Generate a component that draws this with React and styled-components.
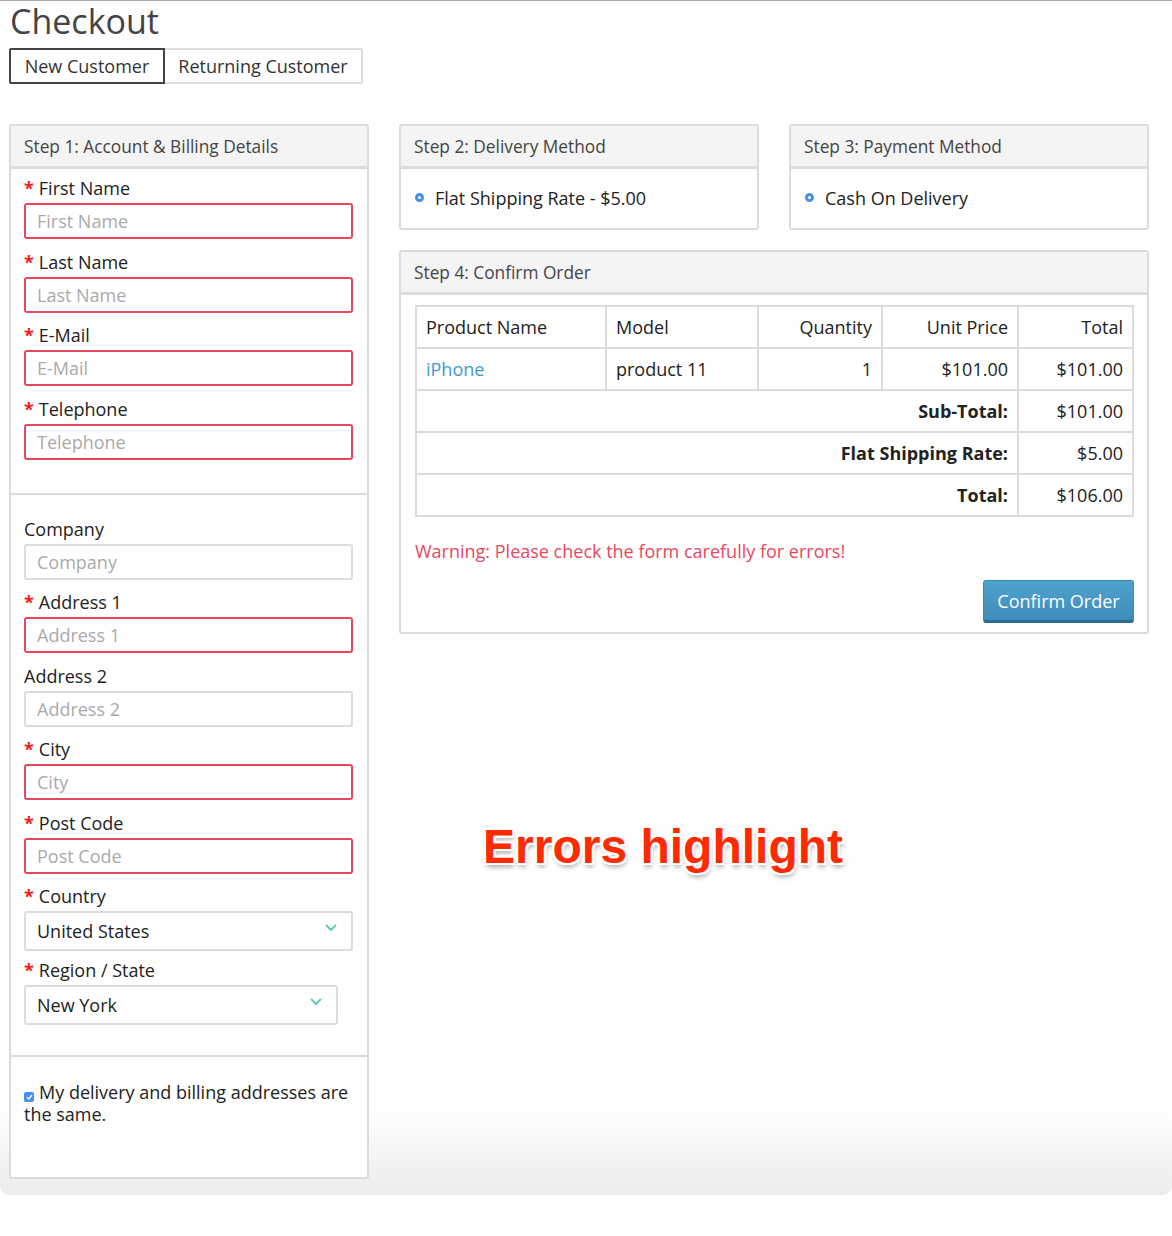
import React from "react";
import styled, { createGlobalStyle } from "styled-components";

const GlobalStyle = createGlobalStyle`
  body {
    margin: 0;
    background: #fff;
    font-family: "Open Sans", "Liberation Sans", sans-serif;
    color: #333;
  }
  * { box-sizing: border-box; }
`;

// styled const
const Page = styled.div`
  width: 1172px;
  min-height: 1194px;
  border-top: 1px solid #a8a8a8;
  border-radius: 0 0 9px 9px;
  background: linear-gradient(to bottom, #fff 0, #fff 1105px, #ececec 100%);
  padding: 0 23px 16px 9px;
`;

const Title = styled.h1`
  margin: 0 0 0 1px;
  font-size: 34px;
  line-height: 40px;
  font-weight: 400;
  color: #444;
`;

const Tabs = styled.div`
  display: flex;
  margin-top: 7px;
`;

const Tab = styled.button`
  height: 36px;
  padding: 0;
  white-space: nowrap;
  text-align: center;
  font-family: inherit;
  font-size: 18px;
  color: #333;
  background: #fff;
  border: 2px solid ${(p) => (p.$active ? "#444" : "#ddd")};
  border-left-width: ${(p) => (p.$active ? "2px" : "0")};
  border-radius: ${(p) => (p.$active ? "2px 0 0 2px" : "0 2px 2px 0")};
  width: ${(p) => p.$w}px;
`;

const Columns = styled.div`
  display: grid;
  grid-template-columns: 360px 750px;
  column-gap: 30px;
  margin-top: 40px;
  align-items: start;
`;

const RightCol = styled.div`
  display: flex;
  flex-direction: column;
  gap: 20px;
`;

const TopRow = styled.div`
  display: grid;
  grid-template-columns: 360px 360px;
  column-gap: 30px;
`;

const Panel = styled.div`
  border: 2px solid #dcdcdc;
  border-radius: 3px;
  background: #fff;
`;

const PanelHead = styled.div`
  height: 43px;
  line-height: 41px;
  padding: 0 13px;
  background: #f4f4f4;
  border-bottom: 3px solid #dcdcdc;
  font-size: 17.3px;
  color: #444;
`;

const Section = styled.div`
  padding: ${(p) => p.$pad};
  border-top: ${(p) => (p.$divided ? "2px solid #dcdcdc" : "none")};
`;

const Group = styled.div`
  margin-bottom: ${(p) => (p.$last ? 0 : p.$tight ? 7 : 10.5)}px;
`;

const Label = styled.div`
  font-size: 18px;
  line-height: 24px;
  color: #222;
  margin-bottom: 3px;
`;

const Star = styled.span`
  color: #f31a1a;
  font-weight: 700;
  margin-right: 5px;
`;

const Input = styled.input`
  display: block;
  width: 329px;
  height: 36px;
  padding: 0 11px;
  font-family: inherit;
  font-size: 18px;
  color: #333;
  border: 2px solid ${(p) => (p.$error ? "#e8475f" : "#dcdcdc")};
  border-radius: 3px;
  outline: none;
  &::placeholder { color: #aaa; }
`;

const SelectBox = styled.div`
  display: flex;
  align-items: center;
  justify-content: space-between;
  width: ${(p) => p.$w}px;
  height: 40px;
  padding: 0 14px 0 11px;
  font-size: 18px;
  color: #222;
  border: 2px solid #dcdcdc;
  border-radius: 3px;
  svg { margin-top: -7px; }
`;

const CheckLine = styled.div`
  font-size: 18px;
  line-height: 22px;
  color: #222;
`;

const CheckBox = styled.span`
  display: inline-flex;
  align-items: center;
  justify-content: center;
  width: 10px;
  height: 10px;
  background: #4a8ff0;
  border-radius: 2px;
  margin-right: 5px;
  vertical-align: -1px;
`;

const Option = styled.div`
  display: flex;
  align-items: center;
  font-size: 18px;
  line-height: 24px;
  color: #222;
  padding: 17px 13px 18px 14px;
`;

const Radio = styled.span`
  width: 9px;
  height: 9px;
  border-radius: 50%;
  border: 3px solid #4a8fe6;
  background: #fff;
  margin-right: 11px;
  margin-top: -1px;
`;

const Body = styled.div`
  padding: 10px 13px 9px 14px;
`;

const Table = styled.table`
  width: 719px;
  border-collapse: collapse;
  font-size: 18px;
  color: #222;
  td {
    border: 2px solid #dcdcdc;
    height: 42px;
    padding: 0 9px;
    line-height: 24px;
  }
`;

const Cell = styled.td`
  text-align: ${(p) => (p.$right ? "right" : "left")};
  font-weight: ${(p) => (p.$bold ? 700 : 400)};
  width: ${(p) => (p.$w ? p.$w + "px" : "auto")};
`;

const Link = styled.a`
  color: #3f9ad0;
  text-decoration: none;
`;

const Warning = styled.div`
  margin-top: 22px;
  font-size: 18px;
  line-height: 24px;
  color: #e9475e;
`;

const Actions = styled.div`
  display: flex;
  justify-content: flex-end;
  margin-top: 17px;
`;

const ConfirmButton = styled.button`
  width: 151px;
  height: 43px;
  font-family: inherit;
  font-size: 18px;
  color: #fff;
  background: linear-gradient(to bottom, #4ea3ce, #3e8cbb);
  border: 1px solid #3a86b4;
  border-bottom: 3px solid #2b6b90;
  border-radius: 3px;
`;

const Annotation = styled.div`
  margin: 165px 0 0 84px;
  font-family: "Liberation Sans", Arial, sans-serif;
  font-weight: 700;
  font-size: 48px;
  line-height: 56px;
  color: #ff2a00;
  text-shadow:
    -2px -2px 0 #fff, 2px -2px 0 #fff, -2px 2px 0 #fff, 2px 2px 0 #fff,
    0 -2px 0 #fff, 0 2px 0 #fff, -2px 0 0 #fff, 2px 0 0 #fff,
    1px 4px 5px rgba(0, 0, 0, 0.35);
`;

const Chevron = () => (
  <svg width="12" height="8" viewBox="0 0 12 8">
    <path d="M1.5 1.5 L6 6 L10.5 1.5" fill="none" stroke="#5ccab4" strokeWidth="1.8" strokeLinecap="round" strokeLinejoin="round" />
  </svg>
);

const personal = [
  ["First Name", true],
  ["Last Name", true],
  ["E-Mail", true],
  ["Telephone", true],
];

const address = [
  ["Company", false],
  ["Address 1", true],
  ["Address 2", false],
  ["City", true],
  ["Post Code", true],
];

const Field = ({ name, required, last }) => (
  <Group $last={last}>
    <Label>{required && <Star>*</Star>}{name}</Label>
    <Input placeholder={name} $error={required} readOnly />
  </Group>
);

const App = () => {
  return (
    <Page>
      <GlobalStyle />
      <Title>Checkout</Title>
      <Tabs>
        <Tab $active $w={156}>New Customer</Tab>
        <Tab $w={198}>Returning Customer</Tab>
      </Tabs>
      <Columns>
        <Panel>
          <PanelHead>Step 1: Account &amp; Billing Details</PanelHead>
          <Section $pad="7px 13px 33px">
            {personal.map(([name, req], i) => (
              <Field key={name} name={name} required={req} last={i === personal.length - 1} />
            ))}
          </Section>
          <Section $divided $pad="22px 13px 30px">
            {address.map(([name, req]) => (
              <Field key={name} name={name} required={req} />
            ))}
            <Group $tight>
              <Label><Star>*</Star>Country</Label>
              <SelectBox $w={329}>United States <Chevron /></SelectBox>
            </Group>
            <Group $last>
              <Label><Star>*</Star>Region / State</Label>
              <SelectBox $w={314}>New York <Chevron /></SelectBox>
            </Group>
          </Section>
          <Section $divided $pad="24px 13px 52px">
            <CheckLine>
              <CheckBox>
                <svg width="7" height="6" viewBox="0 0 7 6">
                  <path d="M1 3.2 L2.8 5 L6 1" fill="none" stroke="#fff" strokeWidth="1.3" />
                </svg>
              </CheckBox>
              My delivery and billing addresses are the same.
            </CheckLine>
          </Section>
        </Panel>

        <RightCol>
          <TopRow>
            <Panel>
              <PanelHead>Step 2: Delivery Method</PanelHead>
              <Option><Radio />Flat Shipping Rate - $5.00</Option>
            </Panel>
            <Panel>
              <PanelHead>Step 3: Payment Method</PanelHead>
              <Option><Radio />Cash On Delivery</Option>
            </Panel>
          </TopRow>
          <Panel>
            <PanelHead>Step 4: Confirm Order</PanelHead>
            <Body>
              <Table>
                <tbody>
                  <tr>
                    <Cell $w={190}>Product Name</Cell>
                    <Cell $w={152}>Model</Cell>
                    <Cell $w={124} $right>Quantity</Cell>
                    <Cell $w={136} $right>Unit Price</Cell>
                    <Cell $right>Total</Cell>
                  </tr>
                  <tr>
                    <Cell><Link href="#">iPhone</Link></Cell>
                    <Cell>product 11</Cell>
                    <Cell $right>1</Cell>
                    <Cell $right>$101.00</Cell>
                    <Cell $right>$101.00</Cell>
                  </tr>
                  <tr>
                    <Cell colSpan={4} $right $bold>Sub-Total:</Cell>
                    <Cell $right>$101.00</Cell>
                  </tr>
                  <tr>
                    <Cell colSpan={4} $right $bold>Flat Shipping Rate:</Cell>
                    <Cell $right>$5.00</Cell>
                  </tr>
                  <tr>
                    <Cell colSpan={4} $right $bold>Total:</Cell>
                    <Cell $right>$106.00</Cell>
                  </tr>
                </tbody>
              </Table>
              <Warning>Warning: Please check the form carefully for errors!</Warning>
              <Actions>
                <ConfirmButton>Confirm Order</ConfirmButton>
              </Actions>
            </Body>
          </Panel>
          <Annotation>Errors highlight</Annotation>
        </RightCol>
      </Columns>
    </Page>
  );
};

export default App;
